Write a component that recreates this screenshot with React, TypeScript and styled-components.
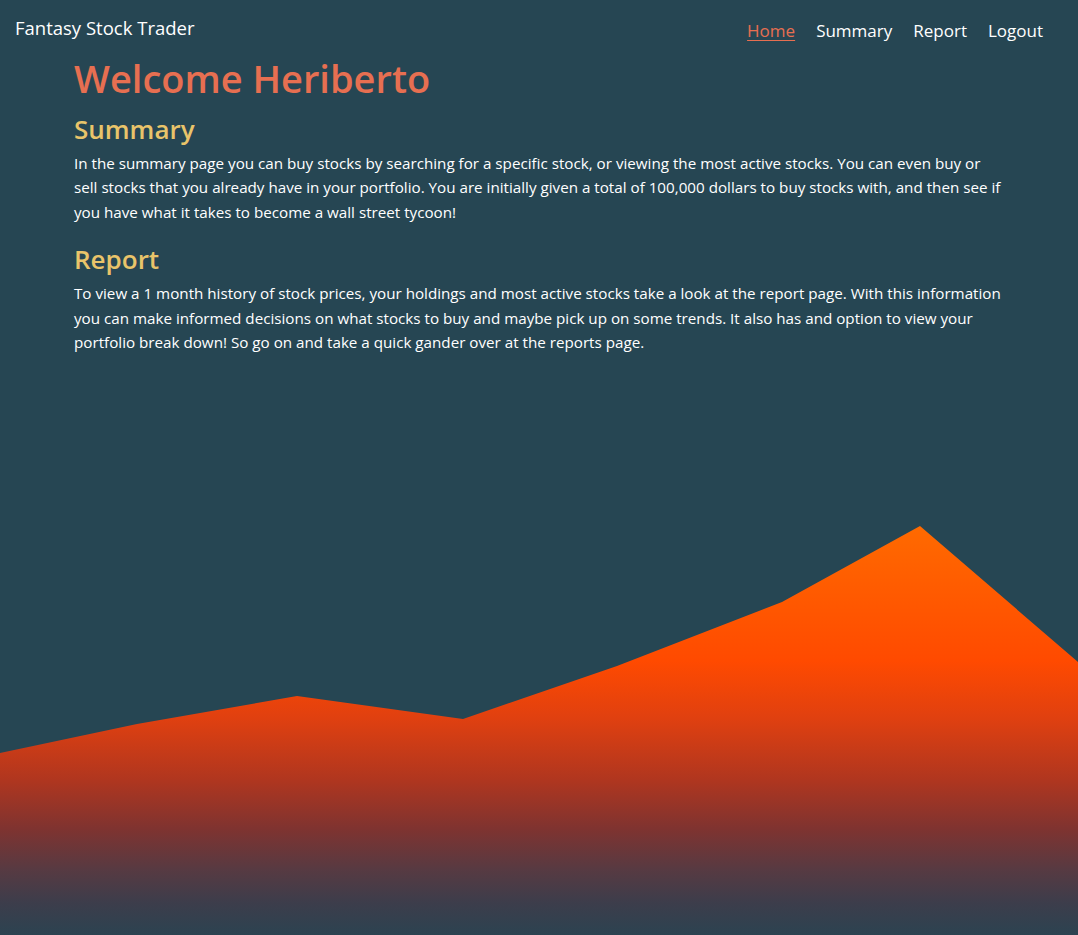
import React from "react";
import styled, { createGlobalStyle } from "styled-components";

const GlobalStyle = createGlobalStyle`
  html, body { margin: 0; padding: 0; background: #264653; }
  body { font-family: "Open Sans", "Noto Sans", sans-serif; color: #ffffff; }
  * { box-sizing: border-box; }
`;

const Page = styled.div`
  min-height: 935px;
  display: flex;
  flex-direction: column;
  background: #264653;
  overflow: hidden;
`;

const NavBar = styled.nav`
  display: flex;
  align-items: flex-start;
  justify-content: space-between;
  padding: 14px 35px 0 15px;
  height: 54px;
`;

const Brand = styled.a`
  font-size: 18.5px;
  line-height: 28px;
  color: #ffffff;
  text-decoration: none;
`;

const NavList = styled.ul`
  list-style: none;
  display: flex;
  gap: 21px;
  margin: 0;
  padding: 4px 0 0 0;
`;

const NavLink = styled.a<{ $active?: boolean }>`
  font-size: 17px;
  line-height: 26px;
  color: ${(p) => (p.$active ? "#e76f51" : "#ffffff")};
  text-decoration: ${(p) => (p.$active ? "underline" : "none")};
  text-underline-offset: 3px;
`;

const Container = styled.main`
  width: 960px;
  margin: 0 auto;
  padding: 0 15px;
`;

const Title = styled.h1`
  font-size: 38px;
  font-weight: 600;
  line-height: 48px;
  margin: 0 0 10px 0;
  color: #e76f51;
`;

const SectionTitle = styled.h3`
  font-size: 26px;
  font-weight: 600;
  line-height: 34px;
  margin: 0 0 5px 0;
  color: #e9c46a;
`;

const Paragraph = styled.p`
  font-size: 15.2px;
  line-height: 24.4px;
  margin: 0 0 18px 0;
  color: #ffffff;
`;

const Wave = styled.svg`
  display: block;
  width: 100%;
  height: 409px;
  margin-top: auto;
`;

export default function App() {
  return (
    <Page>
      <GlobalStyle />
      <NavBar>
        <Brand href="#">Fantasy Stock Trader</Brand>
        <NavList>
          <li><NavLink href="#" $active>Home</NavLink></li>
          <li><NavLink href="#">Summary</NavLink></li>
          <li><NavLink href="#">Report</NavLink></li>
          <li><NavLink href="#">Logout</NavLink></li>
        </NavList>
      </NavBar>
      <Container>
        <Title>Welcome Heriberto</Title>
        <SectionTitle>Summary</SectionTitle>
        <Paragraph>
          In the summary page you can buy stocks by searching for a specific stock, or viewing the most active stocks. You can even buy or sell stocks that you already have in your portfolio. You are initially given a total of 100,000 dollars to buy stocks with, and then see if you have what it takes to become a wall street tycoon!
        </Paragraph>
        <SectionTitle>Report</SectionTitle>
        <Paragraph>
          To view a 1 month history of stock prices, your holdings and most active stocks take a look at the report page. With this information you can make informed decisions on what stocks to buy and maybe pick up on some trends. It also has and option to view your portfolio break down! So go on and take a quick gander over at the reports page.
        </Paragraph>
      </Container>
      <Wave viewBox="0 0 1078 409" preserveAspectRatio="none">
        <defs>
          <linearGradient id="waveFill" x1="0" y1="0" x2="0" y2="1">
            <stop offset="0%" stopColor="#ff6a00" />
            <stop offset="33%" stopColor="#ff4a00" />
            <stop offset="47%" stopColor="#e04010" />
            <stop offset="62%" stopColor="#b0361f" />
            <stop offset="74%" stopColor="#7f3330" />
            <stop offset="84%" stopColor="#573a42" />
            <stop offset="92%" stopColor="#3d3d4b" />
            <stop offset="100%" stopColor="#2c4351" />
          </linearGradient>
        </defs>
        <path
          d="M0 227 L137 198 L297 170 L463 193 L617 140 L782 76 L920 0 L1078 136 L1078 409 L0 409 Z"
          fill="url(#waveFill)"
        />
      </Wave>
    </Page>
  );
}
